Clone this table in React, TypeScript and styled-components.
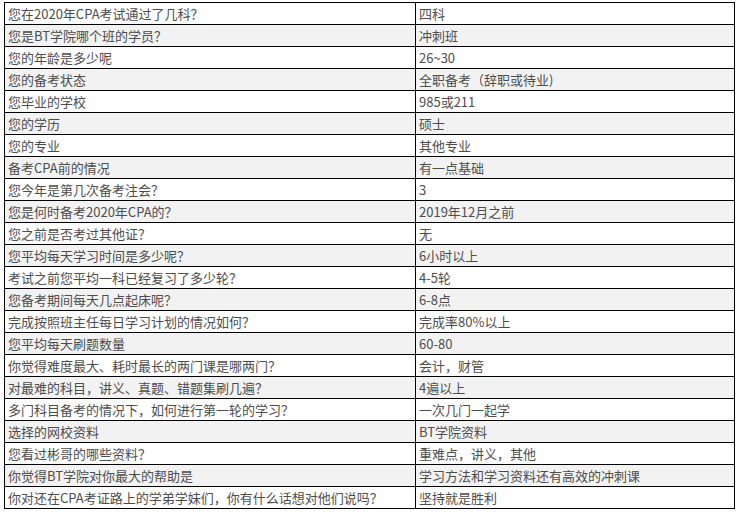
import React from "react";
import styled, { createGlobalStyle } from "styled-components";

const GlobalStyle = createGlobalStyle`
  html, body { margin: 0; padding: 0; background: #fff; }
  body { font-family: "Noto Sans CJK SC", "Noto Sans", sans-serif; }
`;

const Page = styled.div`
  padding: 2px 0 0 4px;
`;

const Table = styled.table`
  border-collapse: collapse;
  width: 730px;
  table-layout: fixed;
`;

const Row = styled.tr<{ $alt: boolean }>`
  background: ${(p) => (p.$alt ? "#f2f2f2" : "#ffffff")};
`;

const Cell = styled.td`
  border: 1px solid #000;
  height: 21px;
  padding: 0 3px;
  font-size: 13px;
  line-height: 21px;
  color: #4d4d4d;
  white-space: nowrap;
  overflow: hidden;
  box-sizing: border-box;
`;

const rows: [string, string][] = [
  ["您在2020年CPA考试通过了几科？", "四科"],
  ["您是BT学院哪个班的学员？", "冲刺班"],
  ["您的年龄是多少呢", "26~30"],
  ["您的备考状态", "全职备考（辞职或待业)"],
  ["您毕业的学校", "985或211"],
  ["您的学历", "硕士"],
  ["您的专业", "其他专业"],
  ["备考CPA前的情况", "有一点基础"],
  ["您今年是第几次备考注会？", "3"],
  ["您是何时备考2020年CPA的？", "2019年12月之前"],
  ["您之前是否考过其他证？", "无"],
  ["您平均每天学习时间是多少呢？", "6小时以上"],
  ["考试之前您平均一科已经复习了多少轮？", "4-5轮"],
  ["您备考期间每天几点起床呢？", "6-8点"],
  ["完成按照班主任每日学习计划的情况如何？", "完成率80%以上"],
  ["您平均每天刷题数量", "60-80"],
  ["你觉得难度最大、耗时最长的两门课是哪两门？", "会计，财管"],
  ["对最难的科目，讲义、真题、错题集刷几遍？", "4遍以上"],
  ["多门科目备考的情况下，如何进行第一轮的学习？", "一次几门一起学"],
  ["选择的网校资料", "BT学院资料"],
  ["您看过彬哥的哪些资料？", "重难点，讲义，其他"],
  ["你觉得BT学院对你最大的帮助是", "学习方法和学习资料还有高效的冲刺课"],
  ["你对还在CPA考证路上的学弟学妹们，你有什么话想对他们说吗？", "坚持就是胜利"],
];

export default function App() {
  return (
    <>
      <GlobalStyle />
      <Page>
        <Table>
          <colgroup>
            <col style={{ width: 411 }} />
            <col style={{ width: 319 }} />
          </colgroup>
          <tbody>
            {rows.map(([q, a], i) => (
              <Row key={i} $alt={i % 2 === 1}>
                <Cell>{q}</Cell>
                <Cell>{a}</Cell>
              </Row>
            ))}
          </tbody>
        </Table>
      </Page>
    </>
  );
}
